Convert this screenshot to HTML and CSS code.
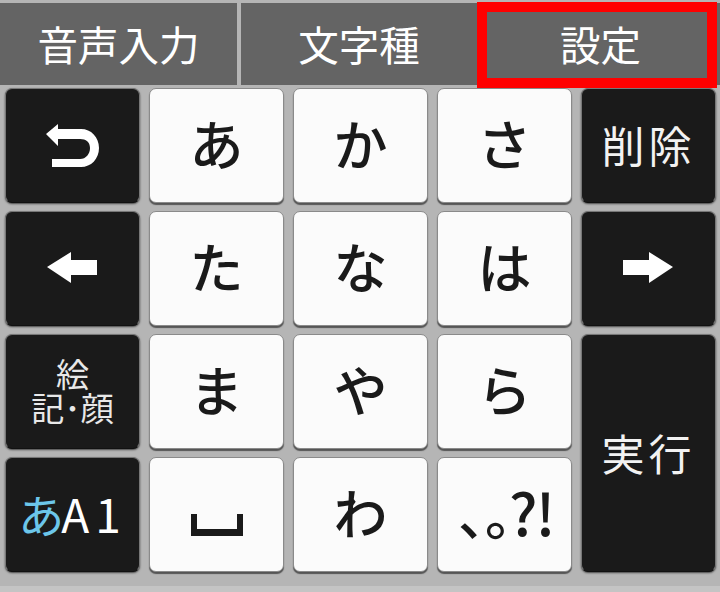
FILE: index.html
```html
<!DOCTYPE html>
<html lang="ja">
<head>
    <meta charset="UTF-8">
    <title>Keyboard</title>
    <link rel="stylesheet" href="styles.css">
</head>
<body>
    <div class="keyboard">
        <div class="tabs">
            <div class="tab tab-voice">音声入力</div>
            <div class="tab tab-type">文字種</div>
            <div class="tab tab-settings">設定</div>
        </div>

        <div class="keys">
            <div class="key dark">
                <svg class="icon" width="54" height="44" viewBox="0 0 54 44"><path d="M0 10 12 0V5H35C45 5 53 13 53 24S45 43 35 43H6V35H34C40 35 44 30 44 24S40 15 34 15H12V22Z" fill="#fff"/></svg>
            </div>
            <div class="key light kana">あ</div>
            <div class="key light kana">か</div>
            <div class="key light kana">さ</div>
            <div class="key dark label">削除</div>

            <div class="key dark">
                <svg class="icon arrow" width="50" height="31" viewBox="0 0 50 31"><path d="M0 15 24 0V8H50V23H24V31Z" fill="#fff"/></svg>
            </div>
            <div class="key light kana">た</div>
            <div class="key light kana">な</div>
            <div class="key light kana">は</div>
            <div class="key dark">
                <svg class="icon arrow" width="50" height="31" viewBox="0 0 50 31"><path d="M50 15 26 0V8H0V23H26V31Z" fill="#fff"/></svg>
            </div>

            <div class="key dark emoji"><span>絵</span><span>記･顔</span></div>
            <div class="key light kana">ま</div>
            <div class="key light kana">や</div>
            <div class="key light kana">ら</div>
            <div class="key dark label enter">実行</div>

            <div class="key dark mode"><span class="mode-kana">あ</span>A1</div>
            <div class="key light">
                <svg class="icon space" width="52" height="22" viewBox="0 0 52 22"><path d="M0 0H6V15H46V0H52V22H0Z" fill="#1a1a1a"/></svg>
            </div>
            <div class="key light kana">わ</div>
            <div class="key light punct"><span class="punct-kana">、。</span>?!</div>
        </div>
    </div>
</body>
</html>
```

FILE: styles.css
```css
* {
    margin: 0;
    padding: 0;
    box-sizing: border-box;
}

body {
    width: 720px;
    height: 592px;
    overflow: hidden;
    background: #b5b5b5;
    font-family: "Noto Sans CJK JP", "Noto Sans", sans-serif;
}

.keyboard {
    height: 586px;
    padding-top: 3px;
    background: #b5b5b5;
    box-shadow: 0 6px 0 #c4c4c4;
}

.tabs {
    display: flex;
    gap: 4px;
    height: 82px;
}

.tab {
    display: flex;
    align-items: center;
    justify-content: center;
    width: 237px;
    padding-bottom: 2px;
    background: #646464;
    color: #fff;
    font-size: 40.5px;
}

.tab-type {
    width: 236px;
}

.tab-settings {
    position: relative;
    flex: 1;
    width: auto;
}

.tab-settings::after {
    content: "";
    box-sizing: border-box;
    position: absolute;
    left: -4px;
    top: -1px;
    width: 240px;
    height: 86px;
    border: 10px solid #ff0000;
}

.keys {
    display: grid;
    grid-template-columns: repeat(5, 135px);
    grid-template-rows: repeat(4, 115px);
    gap: 8px 9px;
    padding: 3px 0 0 5px;
}

.key {
    display: flex;
    align-items: center;
    justify-content: center;
    border-radius: 7px;
    line-height: 1;
}

.light {
    background: #fbfbfb;
    color: #1a1a1a;
    border: 1px solid #8a8a8a;
    box-shadow: 0 2px 1px #555;
}

.dark {
    background: #1a1a1a;
    color: #fff;
    border: 1px solid #777;
    border-bottom-color: #111;
    box-shadow: 0 1px 2px #444;
}

.kana {
    padding-bottom: 5px;
    font-size: 54px;
    font-weight: 500;
}

.label {
    padding-bottom: 3px;
    font-size: 43px;
    letter-spacing: 4px;
    color: #f2f2f2;
}

.enter {
    grid-column: 5;
    grid-row: 3 / span 2;
    padding-bottom: 2px;
}

.emoji {
    flex-direction: column;
    padding-bottom: 3px;
    font-size: 33px;
    line-height: 34px;
    color: #e8e8e8;
}

.mode {
    padding-bottom: 4px;
    font-size: 46px;
    letter-spacing: 6px;
}

.mode-kana {
    margin-right: -3px;
    color: #6cc6ea;
    letter-spacing: 0;
}

.punct {
    display: block;
    padding: 24px 0 0 20px;
    font-size: 58px;
    font-weight: 500;
    letter-spacing: -2px;
    white-space: nowrap;
}

.punct-kana {
    margin-right: -30px;
    font-size: 54px;
    letter-spacing: 0;
}

.arrow {
    margin: 0 2px 3px 0;
}

.space {
    margin-top: 20px;
}
```
